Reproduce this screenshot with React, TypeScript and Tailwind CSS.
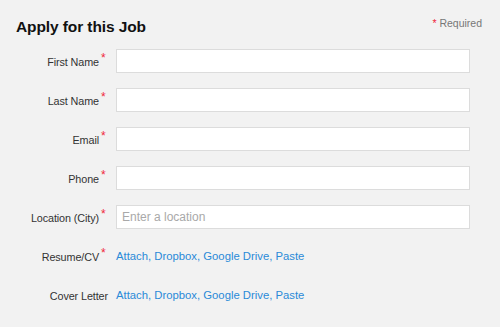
const fields = [
  { label: 'First Name', placeholder: '' },
  { label: 'Last Name', placeholder: '' },
  { label: 'Email', placeholder: '' },
  { label: 'Phone', placeholder: '' },
  { label: 'Location (City)', placeholder: 'Enter a location' },
]

function Star() {
  return <span className="absolute left-full ml-[2px] -top-[2px] text-[12px] leading-none text-[#f0283c]">*</span>
}

function Links() {
  return (
    <div className="text-[11.3px] text-[#2a8ad8]">
      <a href="#">Attach</a>, <a href="#">Dropbox</a>, <a href="#">Google Drive</a>, <a href="#">Paste</a>
    </div>
  )
}

function Label({ text, required }: { text: string; required?: boolean }) {
  return (
    <div className="w-[108px] flex justify-end items-center pt-[2px] text-[10.8px] text-[#333] tracking-[-0.1px]">
      <span className={required ? 'relative mr-[9px]' : 'relative'}>
        {text}
        {required && <Star />}
      </span>
    </div>
  )
}

export default function App() {
  return (
    <div className="w-[500px] h-[327px] bg-[#f2f2f2] font-['Liberation_Sans',Arial,sans-serif] overflow-hidden">
      {/* Header */}
      <div className="flex items-start justify-between pl-4 pr-[18px] pt-[16px] h-[49px]">
        <h2 className="text-[15.5px] font-bold text-[#111] leading-[20px] mt-[1px] tracking-[-0.1px]">Apply for this Job</h2>
        <div className="text-[10.5px] text-[#777] leading-none mt-[2px]">
          <span className="text-[#f0283c]">*</span> Required
        </div>
      </div>

      {/* Form */}
      <div className="flex flex-col gap-[15px]">
        {fields.map((f) => (
          <div key={f.label} className="flex items-center h-[24px]">
            <Label text={f.label} required />
            <input
              className="ml-[8px] w-[354px] h-[24px] bg-white border border-[#dcdcdc] px-[5px] text-[12px] outline-none placeholder:text-[#a9a9a9]"
              placeholder={f.placeholder}
            />
          </div>
        ))}
        <div className="flex items-center h-[24px]">
          <Label text="Resume/CV" required />
          <div className="ml-[8px]"><Links /></div>
        </div>
        <div className="flex items-center h-[24px]">
          <Label text="Cover Letter" />
          <div className="ml-[8px]"><Links /></div>
        </div>
      </div>
    </div>
  )
}
